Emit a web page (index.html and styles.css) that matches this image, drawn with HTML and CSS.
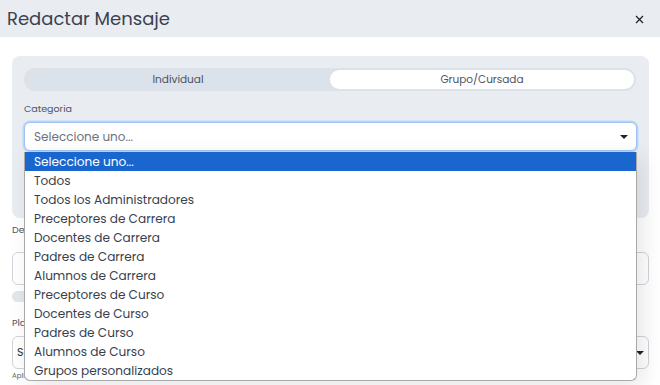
FILE: index.html
```html
<!DOCTYPE html>
<html lang="es">
<head>
<meta charset="utf-8">
<link rel="stylesheet" href="styles.css">
</head>
<body>
<div class="modal">
  <div class="modal-header">
    <h1 class="modal-title">Redactar Mensaje</h1>
    <svg class="close" width="9" height="9" viewBox="0 0 9 9"><path d="M1 1L8 8M8 1L1 8" stroke="#1d2433" stroke-width="1.3" fill="none"/></svg>
  </div>
  <div class="modal-body">
    <div class="card">
      <div class="toggle">
        <div class="toggle-opt">Individual</div>
        <div class="toggle-opt active">Grupo/Cursada</div>
      </div>
      <div class="label">Categoria</div>
      <div class="select-wrap">
        <div class="select focus">
          <span class="placeholder">Seleccione uno...</span>
          <span class="caret"></span>
        </div>
        <ul class="dropdown">
          <li class="selected">Seleccione uno...</li>
          <li>Todos</li>
          <li>Todos los Administradores</li>
          <li>Preceptores de Carrera</li>
          <li>Docentes de Carrera</li>
          <li>Padres de Carrera</li>
          <li>Alumnos de Carrera</li>
          <li>Preceptores de Curso</li>
          <li>Docentes de Curso</li>
          <li>Padres de Curso</li>
          <li>Alumnos de Curso</li>
          <li>Grupos personalizados</li>
        </ul>
      </div>
    </div>
    <div class="label dest">Destinatarios</div>
    <div class="input"></div>
    <div class="pill"></div>
    <div class="label plant">Plantilla</div>
    <div class="select plain">
      <span class="ph-dark">Seleccione uno...</span>
      <span class="caret"></span>
    </div>
    <div class="hint">Aplica una plantilla predefinida</div>
  </div>
</div>
</body>
</html>
```
FILE: styles.css
```css
* { box-sizing: border-box; }
html, body { margin: 0; padding: 0; }
body {
  width: 660px;
  height: 385px;
  overflow: hidden;
  background: #fff;
  font-family: "Poppins", "Open Sans", sans-serif;
  color: #3b4252;
}
.modal-header {
  height: 37px;
  background: #e9ecf1;
  display: flex;
  align-items: center;
  justify-content: space-between;
  padding: 0 16px 0 7px;
}
.modal-title {
  margin: 0;
  font-size: 18px;
  font-weight: 400;
  color: #3a4150;
}
.close {
  margin-top: 1px;
}
.modal-body {
  padding: 19px 11px 0 12px;
}
.card {
  background: #e9ecf1;
  border-radius: 8px;
  padding: 12px 12px 0 12px;
  height: 162px;
}
.toggle {
  display: flex;
  background: #dbe2ea;
  border-radius: 12px;
  height: 23px;
  padding: 2px;
  margin-right: 1px;
}
.toggle-opt {
  flex: 1;
  display: flex;
  align-items: center;
  justify-content: center;
  font-size: 10.5px;
  color: #4a5160;
  border-radius: 10px;
}
.toggle-opt.active {
  background: #fff;
}
.label {
  font-size: 9.5px;
  color: #4d5462;
  margin: 12px 0 7px 0;
  line-height: 12px;
}
.select-wrap {
  position: relative;
}
.select {
  height: 29px;
  background: #fff;
  border: 1px solid #ced4da;
  border-radius: 6px;
  display: flex;
  align-items: center;
  justify-content: space-between;
  padding: 0 8px 0 9px;
  font-size: 12px;
}
.select.focus {
  border-color: #9ec3f3;
  box-shadow: 0 0 0 1.5px #bcd6f7;
}
.placeholder { color: #6c737e; }
.caret {
  width: 0; height: 0;
  border-left: 4px solid transparent;
  border-right: 4px solid transparent;
  border-top: 4px solid #222;
}
.dropdown {
  position: absolute;
  left: 0;
  right: 0;
  top: 30px;
  margin: 0;
  padding: 0;
  list-style: none;
  background: #fff;
  border: 1px solid #a9a9a9;
  border-top: none;
  border-radius: 0 0 6px 6px;
  box-shadow: 6px 6px 22px rgba(0,0,0,0.10);
  overflow: hidden;
  z-index: 5;
}
.dropdown li {
  height: 19px;
  line-height: 19px;
  padding-left: 9px;
  font-size: 12.1px;
  color: #3b3f4c;
}
.dropdown li.selected {
  background: #1a66cf;
  color: #fff;
}
.label.dest {
  margin: 6px 0 16px 0;
}
.label.plant {
  margin: 15px 0 7px 0;
}
.input {
  height: 33px;
  border: 1px solid #ced4da;
  border-radius: 6px;
  background: #fff;
}
.pill {
  height: 11px;
  width: 300px;
  margin-top: 6px;
  background: #e3e7ec;
  border-radius: 6px;
}
.select.plain {
  height: 33px;
  padding: 0 4px 0 4px;
}
.ph-dark { color: #333; font-size: 11px; }
.hint {
  font-size: 7px;
  color: #666;
  margin-top: 2px;
}
```
